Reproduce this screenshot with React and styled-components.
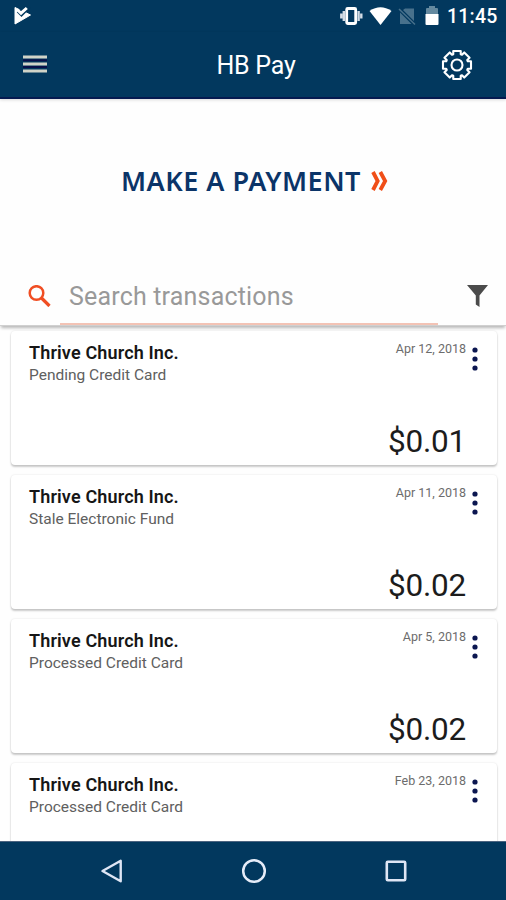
import React from "react";
import styled, { createGlobalStyle } from "styled-components";

const NAVY = "#02385e";

const GlobalStyle = createGlobalStyle`
  * { box-sizing: border-box; }
  body { margin: 0; background: #fefefe; font-family: Roboto, "Liberation Sans", sans-serif; }
  svg { display: block; flex: none; }
  button { border: 0; padding: 0; background: none; font: inherit; color: inherit; }
`;

const Screen = styled.div`
  width: 506px;
  height: 900px;
  display: flex;
  flex-direction: column;
  overflow: hidden;
`;

const StatusBar = styled.div`
  height: 32px;
  flex: none;
  display: flex;
  align-items: center;
  justify-content: space-between;
  padding: 0 9px 0 13px;
  background: ${NAVY};
  color: #fff;
`;

const StatusIcons = styled.div`
  display: flex;
  align-items: center;
  gap: 8px;
`;

const Clock = styled.span`
  width: 50px;
  font-size: 19.5px;
  font-weight: 500;
  line-height: 33px;
  white-space: nowrap;
  letter-spacing: 0.2px;
`;

const AppBar = styled.header`
  height: 67px;
  flex: none;
  display: grid;
  grid-template-columns: 1fr auto 1fr;
  align-items: center;
  padding: 0 33px 0 23px;
  background: ${NAVY};
  border-bottom: 2px solid #051a50;
  box-shadow: 0 1px 3px rgba(0, 0, 0, 0.15);
  color: #fff;
`;

const Title = styled.h1`
  margin: 2px 0 0 16px;
  font-size: 25px;
  font-weight: 400;
  letter-spacing: -0.25px;
  white-space: nowrap;
`;

const IconButton = styled.button`
  justify-self: ${(p) => p.$align || "start"};
`;

const PaymentButton = styled.button`
  height: 166px;
  flex: none;
  display: flex;
  align-items: center;
  justify-content: center;
  gap: 10px;
  padding: 0 0 2px 3px;
  color: #0b3468;
  font-family: "Noto Sans", sans-serif;
  font-size: 27px;
  font-weight: 600;
`;

const PaymentLabel = styled.span`
  margin-top: -2px;
  white-space: nowrap;
  letter-spacing: 0.5px;
`;

const SearchBar = styled.div`
  height: 61px;
  flex: none;
  display: flex;
  align-items: stretch;
  padding: 0 18px 0 28px;
  background: #fefefe;
  border-bottom: 1px solid #d0d0d0;
  box-shadow: 0 3px 3px -1px rgba(0, 0, 0, 0.28);
  z-index: 1;
`;

const SearchIcon = styled.div`
  width: 32px;
  padding-top: 20px;
`;

const SearchField = styled.div`
  width: 378px;
  padding: 3px 0 0 9px;
  border-bottom: 2px solid #f3c3b5;
  color: #999;
  font-size: 25px;
  line-height: 58px;
  letter-spacing: 0.18px;
  white-space: nowrap;
`;

const FilterIcon = styled.div`
  margin-left: auto;
  padding-top: 20px;
`;

const List = styled.main`
  flex: 1;
  min-height: 0;
  overflow: hidden;
  display: flex;
  flex-direction: column;
  gap: 10px;
  padding: 5px 9px 0 11px;
`;

const Card = styled.article`
  height: 134px;
  flex: none;
  display: grid;
  grid-template-columns: 1fr auto 20px;
  grid-template-rows: 1fr auto;
  padding: 10px 11px 4px 18px;
  background: #fff;
  border-radius: 4px;
  box-shadow: 0 2px 2px rgba(0, 0, 0, 0.2), 0 0 2px rgba(0, 0, 0, 0.12);
`;

const Payee = styled.div`
  color: #161616;
  font-size: 18px;
  font-weight: 600;
  line-height: 23px;
  letter-spacing: 0.15px;
  white-space: nowrap;
`;

const Method = styled.div`
  color: #606060;
  font-size: 15.5px;
  line-height: 23px;
`;

const DateText = styled.div`
  color: #6c6c6c;
  font-size: 12.5px;
  line-height: 16px;
`;

const MenuButton = styled.button`
  justify-self: end;
  align-self: start;
  padding: 5px 8px 0 0;
`;

const Amount = styled.div`
  grid-column: 1 / 3;
  justify-self: end;
  color: #1c1c1c;
  font-size: 31.5px;
  font-weight: 400;
  line-height: 38px;
  letter-spacing: -0.2px;
  white-space: nowrap;
`;

const NavBar = styled.nav`
  height: 59px;
  flex: none;
  display: flex;
  align-items: center;
  justify-content: space-between;
  padding: 0 98px 0 100px;
  background: ${NAVY};
  border-top: 1px solid #4c6480;
`;

const transactions = [
  { method: "Pending Credit Card", date: "Apr 12, 2018", amount: "$0.01" },
  { method: "Stale Electronic Fund", date: "Apr 11, 2018", amount: "$0.02" },
  { method: "Processed Credit Card", date: "Apr 5, 2018", amount: "$0.02" },
  { method: "Processed Credit Card", date: "Feb 23, 2018" },
];

const gearPath = Array.from({ length: 8 }, (_, i) => {
  const point = (r, deg) => {
    const a = ((i * 45 + deg - 90) * Math.PI) / 180;
    return `${(16 + r * Math.cos(a)).toFixed(2)} ${(16 + r * Math.sin(a)).toFixed(2)}`;
  };
  return `${i ? "L" : "M"}${point(11.4, -19)} L${point(14.5, -15)} L${point(14.5, 15)} L${point(11.4, 19)}`;
}).join(" ") + "Z";

function Transaction({ method, date, amount }) {
  return (
    <Card>
      <div>
        <Payee>Thrive Church Inc.</Payee>
        <Method>{method}</Method>
      </div>
      <DateText>{date}</DateText>
      <MenuButton aria-label="More">
        <svg width="6" height="26" viewBox="0 0 6 26" fill="#0b1650">
          <circle cx="3" cy="4" r="2.6" />
          <circle cx="3" cy="13" r="2.6" />
          <circle cx="3" cy="22" r="2.6" />
        </svg>
      </MenuButton>
      {amount && <Amount>{amount}</Amount>}
    </Card>
  );
}

export default function App() {
  return (
    <Screen>
      <GlobalStyle />
      <StatusBar>
        <svg width="19" height="20" viewBox="0 0 19 20">
          <path d="M2 1.5 17.5 9 2 18Z" fill="#fff" stroke="#fff" strokeWidth="1" strokeLinejoin="round" />
          <path d="M5.5 4.5 8.5 7.5 16 0" fill="none" stroke={NAVY} strokeWidth="4.8" />
          <path d="M4.5 4 8 7.2 13.8 2" fill="none" stroke="#fff" strokeWidth="3" />
        </svg>
        <StatusIcons>
          <svg width="77" height="22" viewBox="340 4 77 22">
            <rect x="346.7" y="7.5" width="9" height="15" rx="1" fill="none" stroke="#fff" strokeWidth="2.8" />
            <path d="M343.8 10v10M341.3 12.5v5M358.6 10v10M361.3 12.5v5" stroke="#d3dce5" strokeWidth="2.4" />
            <path d="M369.5 10Q380.5 2.5 391.5 10L380.5 24Z" fill="#fff" />
            <path d="M403 9 405 7.5H414V20ZM400 11.5 411.5 23H400Z" fill="#48718c" />
            <path d="m399 8 16 15.5" stroke="#48718c" strokeWidth="1.5" />
          </svg>
          <svg width="14" height="20" viewBox="0 0 14 20">
            <path d="M1 9V3Q1 2 2 2H4V0H10V2H12Q13 2 13 3V9Z" fill="#64899f" />
            <path d="M0.5 8H13.5V18Q13.5 19 12.5 19H1.5Q.5 19 .5 18Z" fill="#fff" />
          </svg>
          <Clock>11:45</Clock>
        </StatusIcons>
      </StatusBar>
      <AppBar>
        <IconButton aria-label="Menu">
          <svg width="24" height="20" viewBox="0 0 24 20">
            <path d="M0 5.3h24M0 12h24" stroke="#08104a" strokeWidth="2" />
            <path d="M0 2h24M0 9h24M0 16h24" stroke="#d0d3c8" strokeWidth="3" />
          </svg>
        </IconButton>
        <Title>HB Pay</Title>
        <IconButton aria-label="Settings" $align="end">
          <svg width="32" height="32" viewBox="0 0 32 32" fill="none" stroke="#fff" strokeWidth="2.1">
            <path d={gearPath} strokeLinejoin="round" />
            <circle cx="16" cy="16" r="5.5" />
          </svg>
        </IconButton>
      </AppBar>
      <PaymentButton>
        <PaymentLabel>MAKE A PAYMENT</PaymentLabel>
        <svg width="17" height="20" viewBox="0 0 17 20" fill="none" stroke="#f04e18" strokeWidth="3.8">
          <path d="M2 1 6.7 10 2 19M9.3 1 14.2 10 9.3 19" />
        </svg>
      </PaymentButton>
      <SearchBar>
        <SearchIcon>
          <svg width="23" height="22" viewBox="0 0 23 22" fill="none" stroke="#f04e23">
            <circle cx="8.5" cy="8" r="6.8" strokeWidth="2.5" />
            <path d="m13.5 13 8 8" strokeWidth="3.2" />
          </svg>
        </SearchIcon>
        <SearchField>Search transactions</SearchField>
        <FilterIcon>
          <svg width="21" height="22" viewBox="0 0 21 22" fill="#4b4b4b">
            <path d="M0 0H21L12.5 10.5V22L8.8 19.5V10.5Z" />
          </svg>
        </FilterIcon>
      </SearchBar>
      <List>
        {transactions.map((t) => (
          <Transaction key={t.date} {...t} />
        ))}
      </List>
      <NavBar>
        <svg width="24" height="26" viewBox="0 0 24 26" fill="none" stroke="#dfe6f5" strokeWidth="2.4">
          <path d="M2.5 13 20.7 2.8V23.2Z" strokeLinejoin="round" />
        </svg>
        <svg width="26" height="26" viewBox="0 0 26 26" fill="none" stroke="#e6ecf8" strokeWidth="2.5">
          <circle cx="13" cy="13" r="10.8" />
        </svg>
        <svg width="24" height="24" viewBox="0 0 24 24" fill="none" stroke="#dfe6f5" strokeWidth="2.6">
          <rect x="2.8" y="2.8" width="18.4" height="18.4" rx="1" />
        </svg>
      </NavBar>
    </Screen>
  );
}
